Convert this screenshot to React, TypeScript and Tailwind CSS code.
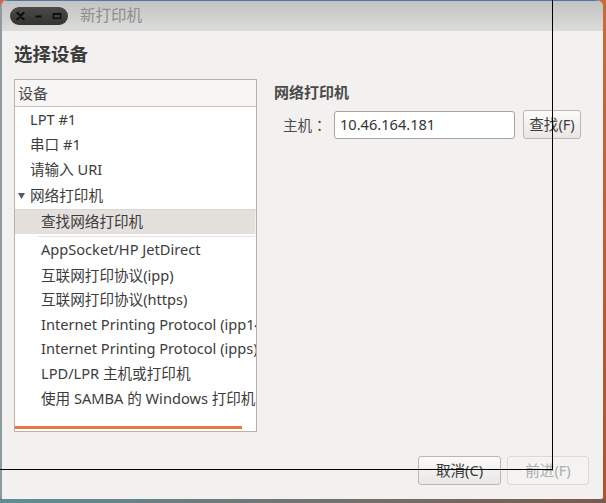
import React from "react";

const FONT = '"Noto Sans", "Noto Sans CJK SC", sans-serif';

type Row = { label: string; h: number; indent: number; selected?: boolean; arrow?: boolean };

const rows: Row[] = [
  { label: "LPT #1", h: 25, indent: 15 },
  { label: "串口 #1", h: 25, indent: 15 },
  { label: "请输入 URI", h: 26, indent: 15 },
  { label: "网络打印机", h: 25, indent: 15, arrow: true },
  { label: "查找网络打印机", h: 29, indent: 26, selected: true },
  { label: "AppSocket/HP JetDirect", h: 26, indent: 26 },
  { label: "互联网打印协议(ipp)", h: 25, indent: 26 },
  { label: "互联网打印协议(https)", h: 24, indent: 26 },
  { label: "Internet Printing Protocol (ipp14)", h: 25, indent: 26 },
  { label: "Internet Printing Protocol (ipps)", h: 24, indent: 26 },
  { label: "LPD/LPR 主机或打印机", h: 25, indent: 26 },
  { label: "使用 SAMBA 的 Windows 打印机", h: 26, indent: 26 },
];

function WindowButtons() {
  return (
    <div className="flex items-center w-[58px] h-[18px] rounded-full bg-gradient-to-b from-[#4a4a47] to-[#35352f] px-[6px] gap-[9px]">
      <svg width="10" height="10" viewBox="0 0 10 10">
        <path d="M1.5 1.5 L8.5 8.5 M8.5 1.5 L1.5 8.5" stroke="#0e0e0e" strokeWidth="2.4" strokeLinecap="round" />
      </svg>
      <svg width="10" height="10" viewBox="0 0 10 10">
        <path d="M1.5 5.5 H8.5" stroke="#0e0e0e" strokeWidth="2.2" />
      </svg>
      <svg width="11" height="10" viewBox="0 0 11 10">
        <rect x="1.5" y="2.5" width="8" height="5" fill="none" stroke="#0e0e0e" strokeWidth="1.6" />
        <path d="M1.5 3.2 H9.5" stroke="#0e0e0e" strokeWidth="1.6" />
      </svg>
    </div>
  );
}

export default function App() {
  return (
    <div
      className="relative w-[606px] h-[503px] overflow-hidden flex flex-col bg-[#4f7f8c]"
      style={{ fontFamily: FONT }}
    >
      <div className="flex h-[499px] bg-gradient-to-b from-[#d06a34] to-[#b4502a]">
        <div className="flex flex-col w-[603px] h-[499px] rounded-t-[7px] rounded-b-[2px] overflow-hidden bg-[#f2f1f0] border-l-[2px] border-[#8f9a9e]">
          {/* Title bar */}
          <div className="flex items-center h-[31px] shrink-0 bg-gradient-to-b from-[#c3c3c3] to-[#dcdcdb] border-t border-[#5077a8] pl-[8px]">
            <WindowButtons />
            <span className="ml-[12px] text-[15.5px] leading-none text-[#8e8e8c]">新打印机</span>
          </div>

          {/* Body */}
          <div className="flex flex-col flex-1 px-[12px]">
            <div className="mt-[11px] h-[24px] flex items-center text-[18.5px] font-bold text-[#3c3c3c] leading-none">
              选择设备
            </div>

            <div className="flex mt-[13px]">
              {/* Device list */}
              <div className="relative w-[243px] h-[353px] border border-[#b9b1aa] bg-white flex flex-col overflow-hidden">
                <div className="h-[27px] shrink-0 flex items-center pl-[3px] bg-[#f7f6f5] border-b border-[#cbc3bb] text-[15px] text-[#4a4a4a]">
                  设备
                </div>
                {rows.map((r) => (
                  <div
                    key={r.label}
                    className="relative flex items-center whitespace-nowrap text-[14.6px] text-[#3c3c3c] shrink-0"
                    style={{ height: r.h, paddingLeft: r.indent }}
                  >
                    {r.selected && (
                      <div className="absolute left-0 right-0 top-[1px] h-[25px] bg-[#e4e1dd] border-t border-[#dad6d1] border-r border-r-[#f2f0ee]" />
                    )}
                    {r.selected && (
                      <div className="absolute left-[23px] right-[1px] bottom-[0px] h-px bg-[#e6e3df]" />
                    )}
                    {r.arrow && (
                      <svg className="absolute left-[3px] top-[10px]" width="7" height="6" viewBox="0 0 7 6">
                        <path d="M0 0 H7 L3.5 6 Z" fill="#5a5a5a" />
                      </svg>
                    )}
                    <span className={"relative " + (r.selected ? "-mt-[2px]" : "")}>{r.label}</span>
                  </div>
                ))}
                <div className="absolute left-0 bottom-[2px] w-[227px] h-[3px] bg-[#ea7446]" />
              </div>

              {/* Right panel */}
              <div className="ml-[17px] flex flex-col">
                <div className="mt-[3px] h-[20px] flex items-center text-[15px] font-bold text-[#4a4a4a]">网络打印机</div>
                <div className="mt-[8px] flex items-center">
                  <span
                    className="w-[60px] shrink-0 pl-[9px] text-[14.6px] text-[#4c4c4c] whitespace-nowrap"
                    style={{ fontFamily: '"Noto Sans CJK TC", "Noto Sans CJK SC", sans-serif' }}
                  >
                    主机：
                  </span>
                  <div className="w-[181px] shrink-0 h-[28px] rounded-[3px] border border-[#aaa39d] bg-white flex items-center pl-[5px] text-[14.6px] text-[#333333]">
                    10.46.164.181
                  </div>
                  <div className="ml-[8px] shrink-0 w-[58px] h-[29px] rounded-[3px] border border-[#bdb6b0] bg-gradient-to-b from-[#fbfbfa] to-[#e9e7e4] flex items-center justify-center text-[14.6px] text-[#3c3c3c] whitespace-nowrap">
                    查找(F)
                  </div>
                </div>
              </div>
            </div>

            {/* Footer */}
            <div className="mt-auto mb-[14px] flex justify-end gap-[6px] pr-[2px]">
              <div className="w-[83px] h-[29px] rounded-[3px] border border-[#bdb6b0] bg-gradient-to-b from-[#fbfbfa] to-[#e9e7e4] flex items-center justify-center text-[14.6px] text-[#3c3c3c]">
                取消(C)
              </div>
              <div className="w-[82px] h-[29px] rounded-[3px] border border-[#ddd9d5] bg-[#f4f3f2] flex items-center justify-center text-[14.6px] text-[#adadab]">
                前进(F)
              </div>
            </div>
          </div>
        </div>
      </div>
      <div className="h-[4px] bg-gradient-to-r from-[#5d8e98] to-[#7a5a4c]" />

      {/* Black overlay rectangle lines */}
      <div className="absolute left-0 top-0 w-[553px] h-[470px] border-r border-b border-black pointer-events-none" />
    </div>
  );
}
